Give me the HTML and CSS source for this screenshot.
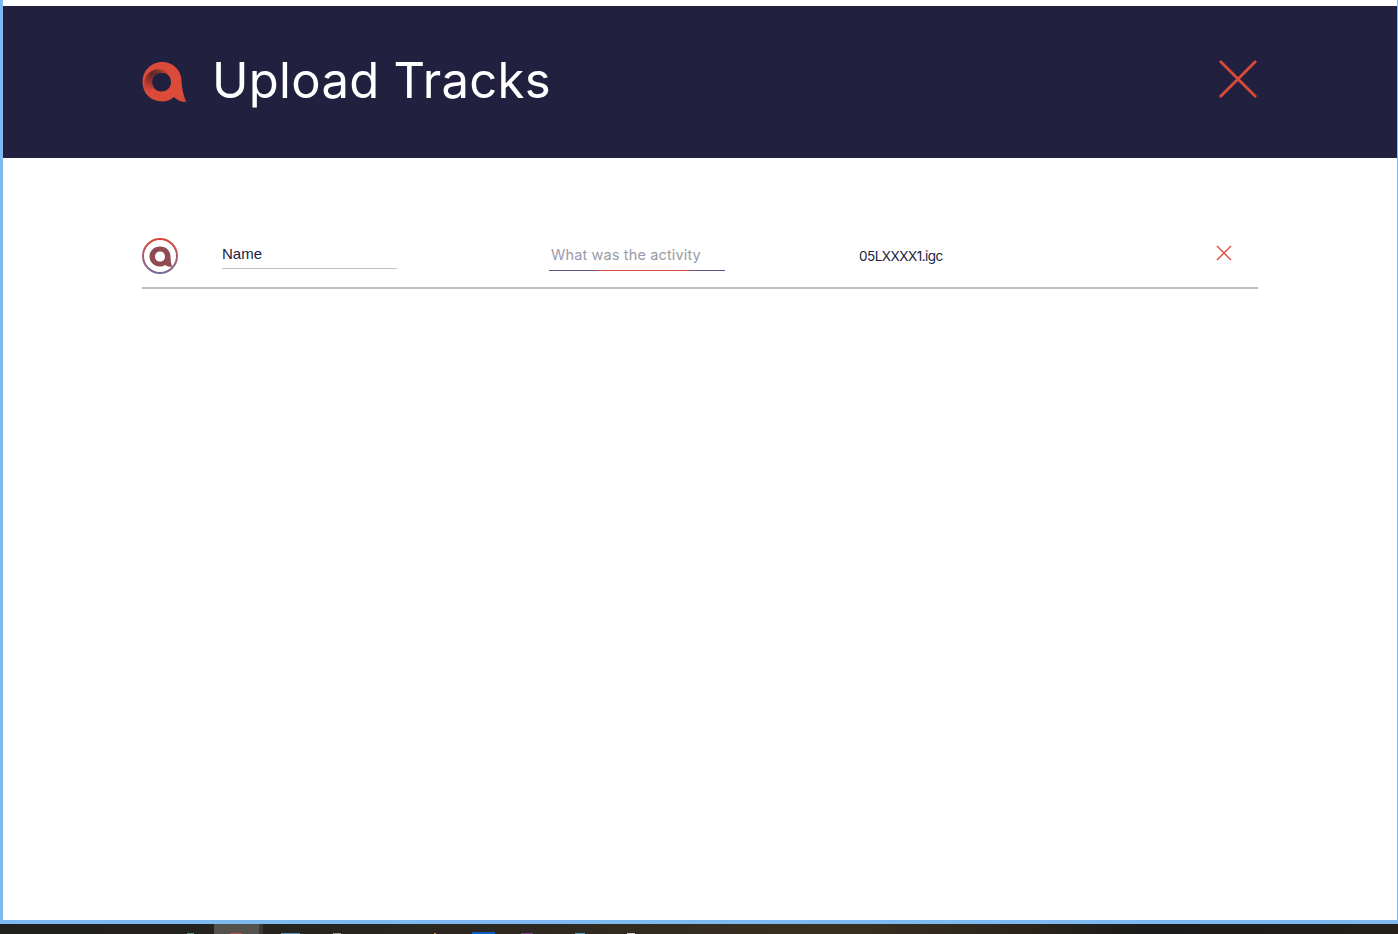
FILE: index.html
```html
<!DOCTYPE html>
<html lang="en">
<head>
<meta charset="utf-8">
<title>Upload Tracks</title>
<link rel="stylesheet" href="styles.css">
</head>
<body>
<div class="window">
  <header class="header">
    <div class="brand">
      <svg class="logo" width="46" height="42" viewBox="0 0 46 42">
        <defs>
          <radialGradient id="lg" gradientUnits="userSpaceOnUse" cx="12" cy="13" r="18">
            <stop offset="0" stop-color="#5f2527"/>
            <stop offset="0.45" stop-color="#96352f"/>
            <stop offset="1" stop-color="#dc4a3a"/>
          </radialGradient>
        </defs>
        <path fill-rule="evenodd" fill="#dc4a3a" d="M21 1C32 1 40.500 9 40.500 20C40.500 26 42.500 34 45 41C40 41 36 39 33 36C29.500 39 25.500 40.500 21 40.500C10 40.500 1.500 32 1.500 21C1.500 10 10 1 21 1ZM20.500 11.500C15 11.500 11 15.500 11 21C11 26.500 15 30.500 20.500 30.500C26 30.500 30 26.500 30 21C30 15.500 26 11.500 20.500 11.500Z"/>
        <path fill="url(#lg)" d="M29 14C22 6 11 7 6 14C2.500 19 2.500 27 5 33L13 27C10.500 24 10.300 17.500 13.800 14.500C17.500 10.500 24 10.500 29 14Z"/>
      </svg>
      <h1 class="title">Upload Tracks</h1>
    </div>
    <button class="close-main" aria-label="Close">
      <svg width="40" height="40" viewBox="0 0 40 40"><path d="M2 2L38 38M38 2L2 38" stroke="#dc4a3a" stroke-width="2.800" fill="none"/></svg>
    </button>
  </header>
  <main class="content">
    <div class="track-row">
      <svg class="track-icon" width="38" height="38" viewBox="0 0 38 38">
        <defs>
          <linearGradient id="rg" x1="0" y1="0" x2="0" y2="1">
            <stop offset="0" stop-color="#d5473a"/>
            <stop offset="1" stop-color="#7c6a94"/>
          </linearGradient>
        </defs>
        <circle cx="19" cy="19" r="17" fill="none" stroke="url(#rg)" stroke-width="2"/>
        <path class="track-glyph" fill-rule="evenodd" fill="#8f4a52" d="M19 9.500C25.500 9.500 29.500 14 29.500 19.500C29.500 23 30 26.500 31 30C28 30 25.500 29 24 28C22.500 29 21 29.500 19 29.500C13 29.500 8.500 25 8.500 19.500C8.500 14 13 9.500 19 9.500ZM19 14.500C16 14.500 14 16.500 14 19.500C14 22.500 16 24.500 19 24.500C22 24.500 24 22.500 24 19.500C24 16.500 22 14.500 19 14.500Z"/>
      </svg>
      <label class="name-field"><span class="name-text">Name</span></label>
      <div class="activity-field"><span class="activity-text">What was the activity</span></div>
      <div class="file-name">05LXXXX1.igc</div>
      <button class="close-row" aria-label="Remove">
        <svg width="18" height="18" viewBox="0 0 18 18"><path d="M2 2L16 16M16 2L2 16" stroke="#dc4a3a" stroke-width="1.400" fill="none"/></svg>
      </button>
    </div>
  </main>
</div>
<footer class="taskbar">
  <span class="tip tip-a"></span>
  <span class="active-task"><span class="tip tip-b"></span></span>
  <span class="tip tip-c"></span>
  <span class="tip tip-d"></span>
  <span class="tip tip-e"></span>
  <span class="tip tip-f"></span>
  <span class="tip tip-g"></span>
  <span class="tip tip-h"></span>
  <span class="tip tip-i"></span>
</footer>
</body>
</html>
```
FILE: styles.css
```css
* { box-sizing: border-box; }
html, body { margin: 0; height: 100%; overflow: hidden; }
body {
  display: flex;
  flex-direction: column;
  height: 934px;
  font-family: "Inter", "Liberation Sans", sans-serif;
  background: #fff;
}
.window {
  flex: 1;
  display: flex;
  flex-direction: column;
  padding-top: 6px;
  background: #fff;
  border-left: 3px solid #7fb9f2;
  border-right: 1px solid #7fb9f2;
  border-bottom: 4px solid #7fb9f2;
}
.header {
  height: 152px;
  flex: none;
  display: flex;
  align-items: center;
  justify-content: space-between;
  padding: 0 139px;
  background: #21203f;
}
.brand { display: flex; align-items: center; gap: 25px; }
.logo { flex: none; margin-left: -1px; margin-top: -1px; }
.title {
  margin: -3px 0 0;
  font-size: 49px;
  font-weight: 400;
  line-height: 60px;
  color: #fff;
  letter-spacing: 0.3px;
}
.close-main, .close-row {
  padding: 0;
  border: 0;
  background: none;
  display: flex;
}
.close-main { margin-top: -6px; }
.content { flex: 1; padding: 78px 139px 0; }
.track-row {
  height: 53px;
  display: flex;
  align-items: flex-start;
  border-bottom: 2px solid #c0c0c0;
}
.track-icon { flex: none; margin: 1px 0 0 -1px; }
.name-field {
  width: 175px;
  height: 31px;
  margin: 2px 0 0 43px;
  padding-top: 7px;
  border-bottom: 1px solid #c0c0c0;
}
.name-text { font-size: 15px; line-height: 18px; color: #21203f; font-family: "Liberation Sans", sans-serif; display: block; }
.activity-field {
  width: 176px;
  height: 33px;
  margin: 2px 0 0 152px;
  padding: 8px 0 0 2px;
  border-bottom: 1px solid;
  border-image: linear-gradient(90deg, #5b5490 0%, #5b5490 25%, #dc4a3a 30%, #dc4a3a 75%, #5b5490 85%, #5b5490 100%) 1;
}
.activity-text { font-size: 14.5px; line-height: 18px; color: #9a9aa6; letter-spacing: 0.14px; display: block; white-space: nowrap; }
.file-name {
  margin: 10px 0 0 134px;
  width: 348px;
  font-size: 13.5px;
  letter-spacing: -0.5px;
  line-height: 20px;
  color: #21203f;
}
.close-row { margin: 8px 0 0 8px; }
.taskbar {
  height: 10px;
  flex: none;
  display: flex;
  align-items: flex-end;
  padding-left: 187px;
  background: linear-gradient(90deg, #1f1f1d 0%, #2a2620 30%, #38301f 60%, #2c251c 72%, #1b1b1b 82%, #241f1a 100%);
}
.active-task {
  width: 49px;
  height: 10px;
  margin-left: 20px;
  display: flex;
  align-items: flex-end;
  justify-content: center;
  background: #55524e;
  border-right: 4px solid #3a3835;
  padding-right: 2px;
}
.tip { flex: none; height: 1px; }
.tip-a { width: 7px; background: #5f8a78; }
.tip-b { width: 12px; background: #b9544f; }
.tip-c { width: 19px; margin-left: 18px; background: #4d94c4; }
.tip-d { width: 8px; margin-left: 33px; background: #9a9a90; }
.tip-e { width: 2px; margin-left: 93px; background: #e08a20; }
.tip-f { width: 23px; height: 2px; margin-left: 36px; background: #0f5cc0; }
.tip-g { width: 12px; margin-left: 26px; background: #8a3a8a; }
.tip-h { width: 10px; margin-left: 42px; background: #4aa0c4; }
.tip-i { width: 8px; margin-left: 42px; background: #c8c8c8; }
```
